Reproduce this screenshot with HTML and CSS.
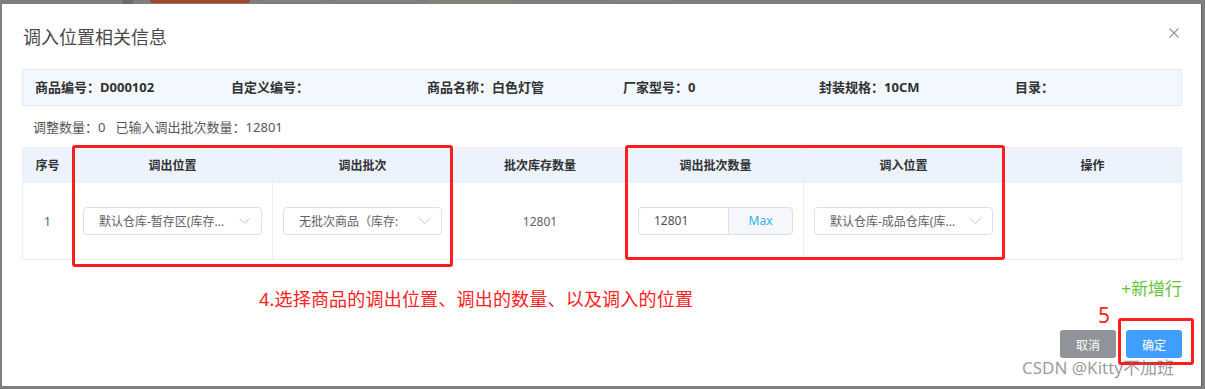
FILE: index.html
```html
<!DOCTYPE html>
<html lang="zh">
<head>
    <meta charset="UTF-8">
    <title>调入位置相关信息</title>
    <link rel="stylesheet" href="styles.css">
</head>
<body>

    <!-- page behind the overlay -->
    <div class="backdrop">
        <span class="bg-btn bg-dark"></span>
        <span class="bg-btn bg-orange"></span>
        <span class="bg-btn bg-blue w1"></span>
        <span class="bg-btn bg-blue w2"></span>
        <span class="bg-btn bg-tan"></span>
        <span class="bg-btn bg-blue w3"></span>
    </div>

    <div class="dialog">
        <div class="dialog-header">
            <span class="dialog-title">调入位置相关信息</span>
            <span class="close">
                <svg width="10" height="10" viewBox="0 0 10 10"><path d="M0.5 0.5L9.5 9.5M9.5 0.5L0.5 9.5" stroke="#909399" stroke-width="1.1" fill="none"/></svg>
            </span>
        </div>

        <div class="dialog-body">
            <div class="info-bar">
                <div class="info-item">商品编号：<b>D000102</b></div>
                <div class="info-item">自定义编号：</div>
                <div class="info-item">商品名称：<b>白色灯管</b></div>
                <div class="info-item">厂家型号：<b>0</b></div>
                <div class="info-item">封装规格：<b>10CM</b></div>
                <div class="info-item">目录：</div>
            </div>

            <div class="count-line">调整数量：0&nbsp;&nbsp;&nbsp;已输入调出批次数量：12801</div>

            <table class="grid">
                <colgroup>
                    <col style="width:50px">
                    <col style="width:200px">
                    <col style="width:180px">
                    <col style="width:175px">
                    <col style="width:176px">
                    <col style="width:200px">
                    <col style="width:178px">
                </colgroup>
                <thead>
                    <tr>
                        <th>序号</th>
                        <th>调出位置</th>
                        <th>调出批次</th>
                        <th>批次库存数量</th>
                        <th>调出批次数量</th>
                        <th>调入位置</th>
                        <th>操作</th>
                    </tr>
                </thead>
                <tbody>
                    <tr>
                        <td>1</td>
                        <td>
                            <div class="select">
                                <span class="select-text">默认仓库-暂存区(库存...</span>
                                <svg class="arrow" width="11" height="6" viewBox="0 0 11 6"><path d="M0.5 0.5L5.5 5.5L10.5 0.5" stroke="#c0c4cc" fill="none"/></svg>
                            </div>
                        </td>
                        <td>
                            <div class="select">
                                <span class="select-text">无批次商品（库存:</span>
                                <svg class="arrow" width="11" height="6" viewBox="0 0 11 6"><path d="M0.5 0.5L5.5 5.5L10.5 0.5" stroke="#c0c4cc" fill="none"/></svg>
                            </div>
                        </td>
                        <td>12801</td>
                        <td>
                            <div class="input-group">
                                <span class="input-value">12801</span>
                                <span class="input-append">Max</span>
                            </div>
                        </td>
                        <td>
                            <div class="select">
                                <span class="select-text">默认仓库-成品仓库(库...</span>
                                <svg class="arrow" width="11" height="6" viewBox="0 0 11 6"><path d="M0.5 0.5L5.5 5.5L10.5 0.5" stroke="#c0c4cc" fill="none"/></svg>
                            </div>
                        </td>
                        <td></td>
                    </tr>
                </tbody>
            </table>

            <div class="add-row">+新增行</div>
        </div>

        <div class="dialog-footer">
            <button class="btn btn-cancel">取消</button>
            <button class="btn btn-ok">确定</button>
        </div>

        <!-- screenshot annotations -->
        <div class="mark mark-1"></div>
        <div class="mark mark-2"></div>
        <div class="mark mark-3"></div>
        <div class="note">4.选择商品的调出位置、调出的数量、以及调入的位置</div>
        <div class="step">5</div>
        <div class="watermark">CSDN @Kitty不加班</div>
    </div>

</body>
</html>
```

FILE: styles.css
```css
body {
    margin: 0;
    padding: 0;
    background-color: #7f7f7f;
    font-family: "Noto Sans", "Noto Sans CJK SC", sans-serif;
    color: #606266;
}

.backdrop {
    height: 4px;
    display: flex;
    gap: 10px;
    padding-left: 122px;
    overflow: hidden;
}

.bg-btn {
    height: 3px;
    border-radius: 0 0 3px 3px;
}

.bg-dark {
    width: 11px;
    height: 4px;
    background-color: #6a6a6a;
    margin-right: 7px;
}

.bg-orange {
    width: 100px;
    background-color: #a5452a;
}

.bg-blue {
    border: 1px solid #6f7f94;
    border-top: none;
    height: 2px;
}

.w1 { width: 60px; }
.w2 { width: 86px; }
.w3 { width: 66px; margin-left: 86px; }

.bg-tan {
    width: 80px;
    border: 1px solid #8c8570;
    border-top: none;
    height: 2px;
}

.dialog {
    position: relative;
    margin-left: 2px;
    width: 1199px;
    height: 382px;
    background-color: #ffffff;
    box-shadow: 1px 0 0 #5d5d5d;
}

.dialog-header {
    padding: 21px 20px 19px 21px;
    line-height: 24px;
}

.dialog-title {
    font-size: 18px;
    color: #4a4a4a;
}

.close {
    position: absolute;
    top: 24px;
    right: 22px;
    width: 10px;
    height: 10px;
    display: flex;
}

.dialog-body {
    padding: 0 19px 0 20px;
}

.info-bar {
    display: grid;
    grid-template-columns: repeat(6, 196px);
    padding-left: 12px;
    height: 35px;
    line-height: 35px;
    background-color: #f3f8fe;
    border: 1px solid #e3e9f2;
    font-size: 13px;
    font-weight: 600;
    color: #303133;
}

.info-item b {
    font-weight: 700;
}

.count-line {
    margin: 11px 0 10px 11px;
    line-height: 20px;
    font-size: 13px;
    color: #555;
}

.grid {
    width: 1160px;
    border-collapse: collapse;
    table-layout: fixed;
    font-size: 12px;
}

.grid th,
.grid td {
    border: 1px solid #ebeef5;
    text-align: center;
    padding: 0 10px;
}

.grid th {
    height: 34px;
    background-color: #edf3fc;
    color: #303133;
    font-weight: 700;
}

.grid td {
    height: 76px;
    color: #606266;
}

.select {
    display: flex;
    align-items: center;
    justify-content: space-between;
    height: 26px;
    padding: 0 11px 0 15px;
    border: 1px solid #dcdfe6;
    border-radius: 4px;
    text-align: left;
}

.select-text {
    white-space: nowrap;
}

.arrow {
    margin-left: 8px;
    flex-shrink: 0;
}

.input-group {
    display: flex;
    height: 28px;
    text-align: left;
}

.input-value {
    width: 74px;
    padding-left: 15px;
    line-height: 26px;
    border: 1px solid #dcdfe6;
    border-right: none;
    border-radius: 4px 0 0 4px;
    color: #505050;
}

.input-append {
    flex: 1;
    line-height: 26px;
    text-align: center;
    background-color: #f5f7fa;
    border: 1px solid #dcdfe6;
    border-radius: 0 4px 4px 0;
    color: #2fb2f8;
}

.add-row {
    margin-top: 17px;
    text-align: right;
    line-height: 24px;
    font-size: 17px;
    color: #67c23a;
}

.dialog-footer {
    display: flex;
    justify-content: flex-end;
    gap: 10px;
    padding: 29px 19px 0 0;
}

.btn {
    width: 56px;
    height: 28px;
    border: none;
    border-radius: 3px;
    font-family: "Noto Sans CJK SC", sans-serif;
    font-size: 12px;
    color: #ffffff;
}

.btn-cancel {
    background-color: #909399;
}

.btn-ok {
    background-color: #409eff;
}

/* annotations drawn over the screenshot */
.mark {
    position: absolute;
    border: 3px solid #ff1e1e;
    border-radius: 3px;
    box-sizing: border-box;
}

.mark-1 {
    left: 70px;
    top: 141px;
    width: 381px;
    height: 122px;
}

.mark-2 {
    left: 623px;
    top: 141px;
    width: 380px;
    height: 115px;
}

.mark-3 {
    left: 1116px;
    top: 314px;
    width: 76px;
    height: 47px;
}

.note {
    position: absolute;
    left: 257px;
    top: 283px;
    line-height: 24px;
    font-size: 18px;
    letter-spacing: 0.2px;
    color: #ff2020;
}

.step {
    position: absolute;
    left: 1096px;
    top: 298px;
    line-height: 26px;
    font-size: 21px;
    color: #ff2020;
}

.watermark {
    position: absolute;
    left: 1020px;
    top: 352px;
    line-height: 24px;
    font-size: 17px;
    color: rgba(110, 110, 110, 0.7);
}
```
